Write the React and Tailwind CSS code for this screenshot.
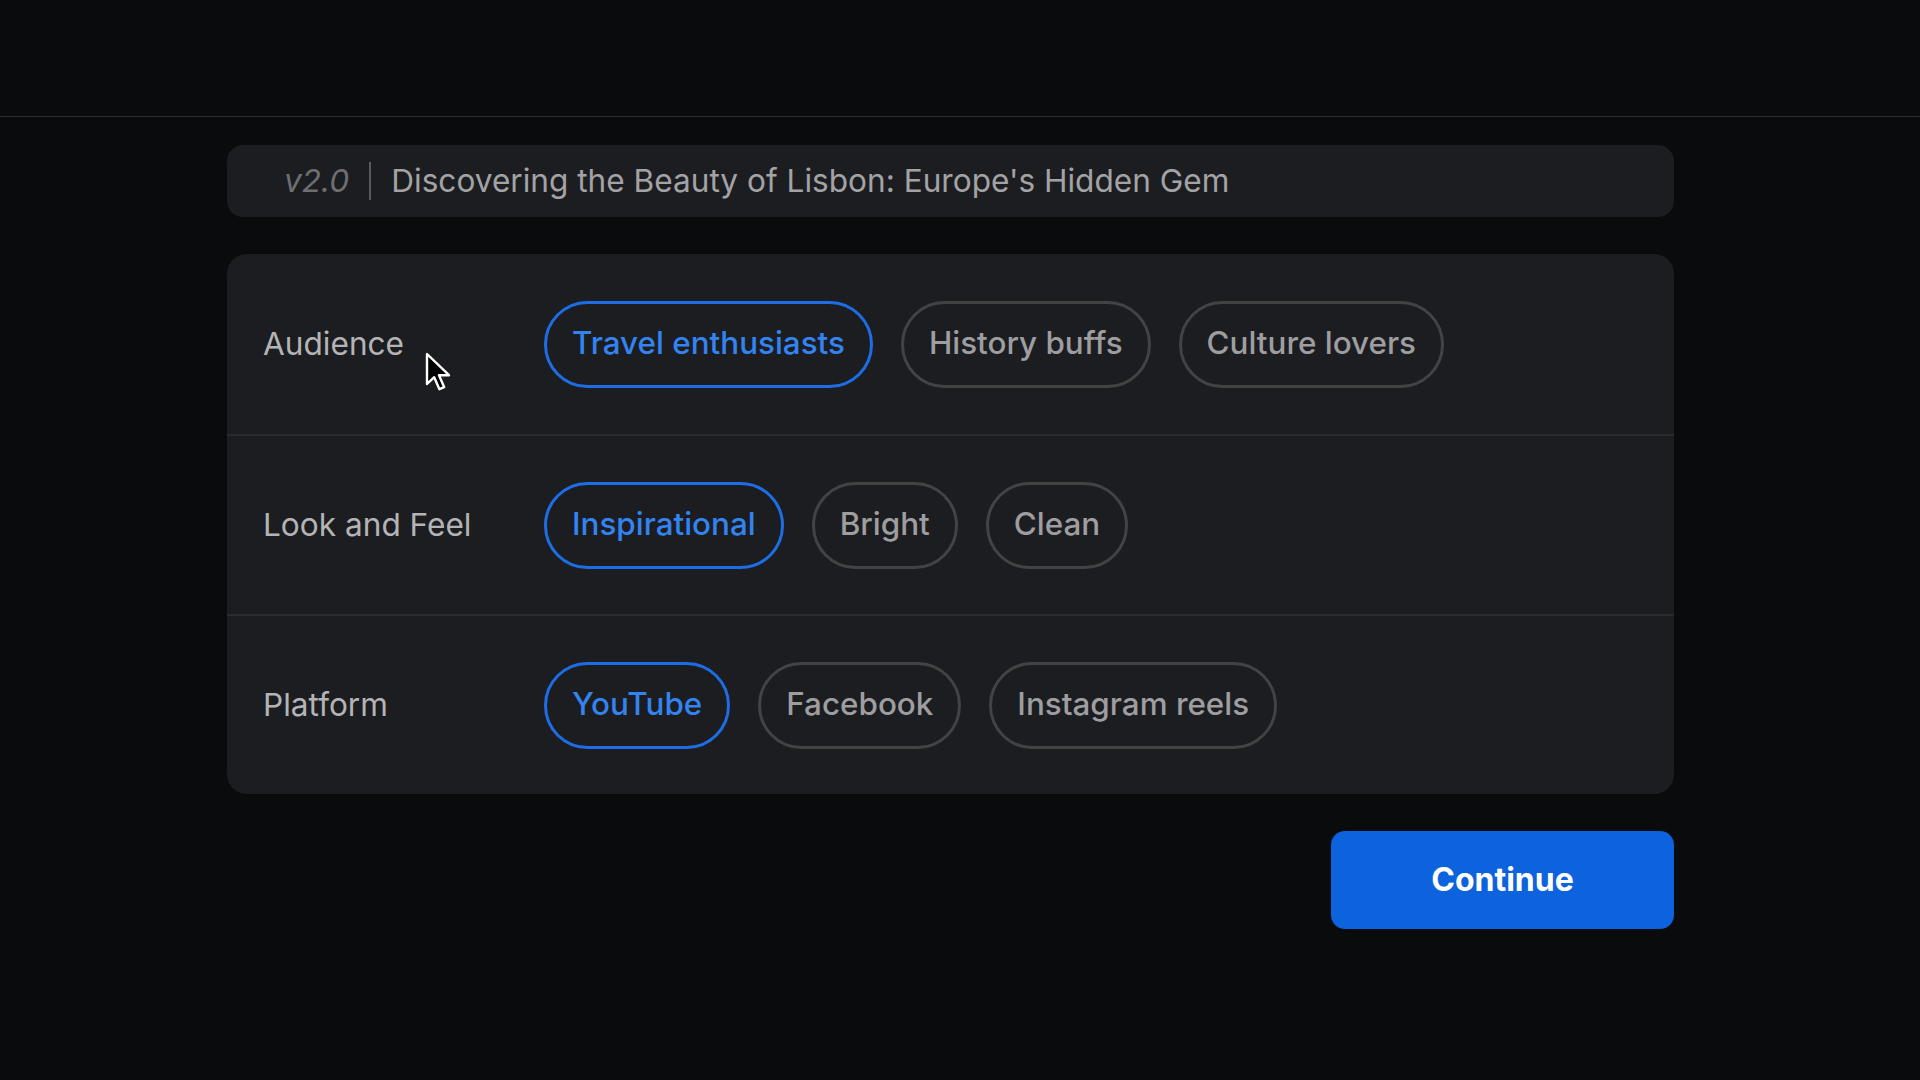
import { useState } from 'react'

const groups = [
  { label: 'Audience', options: ['Travel enthusiasts', 'History buffs', 'Culture lovers'] },
  { label: 'Look and Feel', options: ['Inspirational', 'Bright', 'Clean'] },
  { label: 'Platform', options: ['YouTube', 'Facebook', 'Instagram reels'] },
]

function Cursor() {
  return (
    <svg width="28" height="42" viewBox="0 0 14 21" className="absolute left-[198px] top-[98px]">
      <path
        d="M1 1 L1 16 L4.6 12.6 L7.2 18.6 L9.6 17.6 L7 11.6 L12 11.6 Z"
        fill="#000"
        stroke="#fff"
        strokeWidth="1.2"
        strokeLinejoin="round"
      />
    </svg>
  )
}

export default function App() {
  const [selected, setSelected] = useState({
    Audience: 'Travel enthusiasts',
    'Look and Feel': 'Inspirational',
    Platform: 'YouTube',
  })

  return (
    <div className="min-h-screen bg-[#0a0b0d] font-['Inter',sans-serif]">
      <div className="h-[117px] border-b border-[#2a2b2e]"></div>

      <div className="ml-[227px] w-[1447px] pt-[28px]">
        {/* Title */}
        <div className="flex h-[72px] items-center rounded-[16px] bg-[#1c1d20] pl-[57px] text-[31.6px]">
          <span className="italic text-[#6f6f72]">v2.0</span>
          <span className="mx-[20px] h-[38px] w-[2px] bg-[#5a5a5d]"></span>
          <span className="text-[#a3a3a6]">Discovering the Beauty of Lisbon: Europe's Hidden Gem</span>
        </div>

        {/* Options */}
        <div className="relative mt-[37px] rounded-[20px] bg-[#1c1d20]">
          {groups.map((g, i) => (
            <div
              key={g.label}
              className={`flex h-[180px] items-center pl-[36px] ${i > 0 ? 'border-t-2 border-[#2a2b2e]' : ''}`}
            >
              <div className="w-[281px] text-[31.6px] text-[#b4b4b7]">{g.label}</div>
              <div className="flex gap-[28px]">
                {g.options.map((o) => {
                  const active = selected[g.label] === o
                  return (
                    <button
                      key={o}
                      onClick={() => setSelected({ ...selected, [g.label]: o })}
                      className={`h-[87px] rounded-full border-[3px] px-[25px] text-[31.4px] font-medium ${
                        active ? 'border-[#1d6ee6] text-[#3383f0]' : 'border-[#434346] text-[#9e9ea1]'
                      }`}
                    >
                      {o}
                    </button>
                  )
                })}
              </div>
            </div>
          ))}
          <Cursor />
        </div>

        <div className="mt-[37px] flex justify-end">
          <button className="h-[98px] w-[343px] rounded-[14px] bg-[#0d62dd] text-[32px] font-bold text-white">
            Continue
          </button>
        </div>
      </div>
    </div>
  )
}
